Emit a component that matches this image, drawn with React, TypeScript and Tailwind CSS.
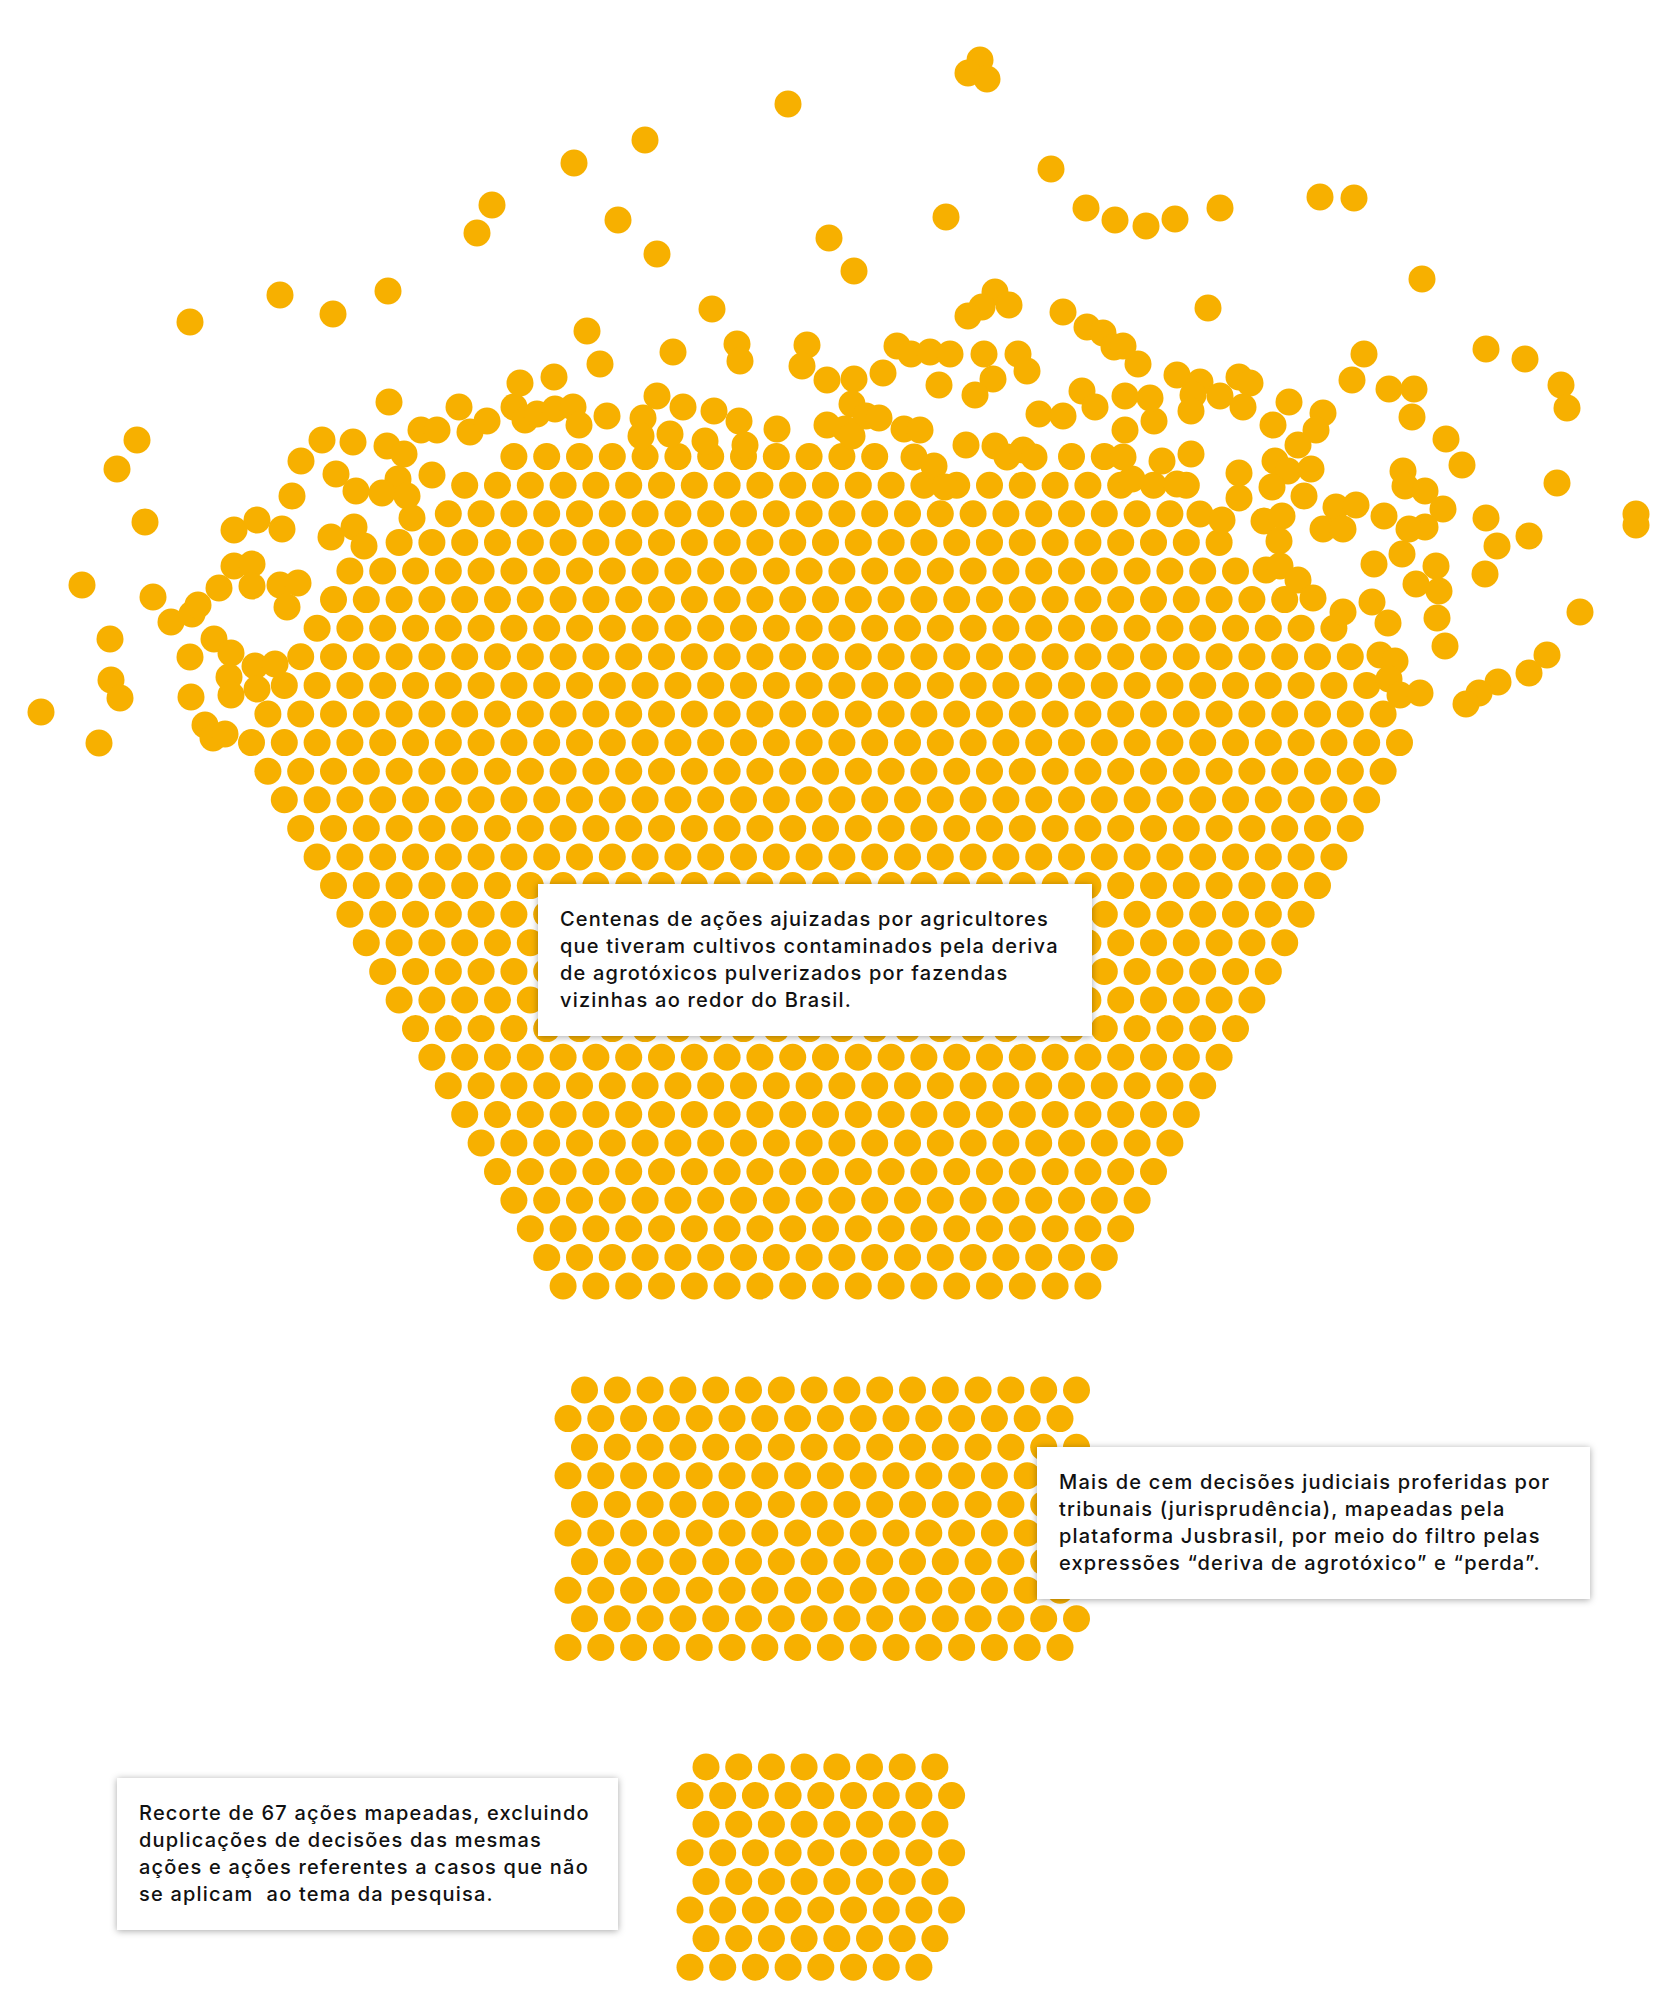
const DOT = '#f7b000';
const R = 13.5;

type Pt = [number, number];

// funnel rows counted from the bottom; [missing on left, missing on right]
const topMiss: Record<number, [number, number]> = {
  20: [1, 1],
  21: [2, 2],
  22: [3, 3],
  23: [4, 4],
  24: [5, 6],
  25: [6, 8],
  26: [8, 9],
  27: [10, 11],
  28: [11, 11],
  29: [13, 14],
};

function funnelDots(): Pt[] {
  const pts: Pt[] = [];
  for (let r = 0; r < 30; r++) {
    const y = 1286 - r * 28.6;
    const n = 17 + r;
    const [lm, rm] = topMiss[r] ?? [0, 0];
    for (let k = lm; k <= n - 1 - rm; k++) {
      if (r === 29 && k >= 25 && k <= 29) continue;
      pts.push([825.5 + (k - (n - 1) / 2) * 32.8, y]);
    }
  }
  return pts;
}

function rectDots(): Pt[] {
  const pts: Pt[] = [];
  for (let i = 0; i < 10; i++) {
    const x0 = i % 2 === 0 ? 584.5 : 568;
    for (let k = 0; k < 16; k++) pts.push([x0 + k * 32.8, 1390 + i * 28.6]);
  }
  return pts;
}

function smallDots(): Pt[] {
  const pts: Pt[] = [];
  for (let i = 0; i < 8; i++) {
    const odd = i % 2 === 1;
    const x0 = odd ? 690 : 706;
    const n = odd && i < 7 ? 9 : 8;
    for (let k = 0; k < n; k++) pts.push([x0 + k * 32.7, 1767 + i * 28.6]);
  }
  return pts;
}

// loose dots splashing above the pile
const loose: Pt[] = [
  [980, 60], [968, 73], [987, 79], [788, 104], [645, 140], [574, 163], [1051, 169],
  [492, 205], [477, 233], [618, 220], [657, 254], [946, 217], [829, 238], [854, 271],
  [1086, 208], [1115, 220], [1146, 226], [1175, 219], [1220, 208], [1320, 197], [1354, 198],
  [1422, 279], [1208, 308], [995, 292], [982, 307], [968, 316], [1009, 305],
  [1063, 312], [1087, 327], [1103, 333], [1114, 347],
  [712, 309], [190, 322], [280, 295], [333, 314], [388, 291],
  // left
  [389, 402], [137, 440], [117, 469], [145, 522], [82, 585], [153, 597], [110, 639],
  [111, 680], [120, 698], [41, 712], [99, 743], [190, 657], [191, 697],
  [171, 622], [192, 614], [198, 605], [214, 639], [231, 653], [229, 677], [231, 695],
  [205, 725], [213, 738], [225, 734], [219, 588], [234, 566], [252, 564], [252, 586],
  [234, 530], [257, 520], [282, 529], [292, 496], [301, 461], [322, 440], [353, 442],
  [336, 474], [356, 491], [331, 537], [354, 527], [364, 546], [280, 585], [298, 583],
  [287, 607], [255, 666], [275, 664], [257, 689], [282, 689], [296, 661],
  [387, 446], [404, 454], [398, 479], [382, 493], [407, 496], [412, 518], [432, 475],
  [421, 430], [437, 430], [459, 407], [470, 432], [487, 421], [514, 407], [525, 420],
  [537, 414], [555, 409], [520, 383], [554, 377],
  // middle
  [587, 331], [600, 364], [673, 352], [737, 344], [740, 361], [807, 345], [802, 366],
  [827, 380], [854, 379], [883, 373], [897, 346], [911, 354], [930, 352], [950, 354],
  [984, 354], [993, 379], [975, 395], [1018, 354], [1027, 371], [939, 385],
  [1039, 414], [1063, 416], [1082, 391], [1095, 407], [966, 445], [995, 446], [1007, 457],
  [1023, 450], [1034, 457], [573, 407], [579, 425], [607, 416], [643, 418], [641, 436],
  [657, 396], [670, 434], [683, 407], [705, 441], [714, 411], [739, 421], [745, 445],
  [777, 429], [852, 404], [845, 429], [827, 425], [866, 416], [879, 418], [852, 436],
  [904, 429], [920, 430], [914, 457], [934, 466], [929, 486], [945, 487],
  // right
  [1486, 349], [1525, 359], [1561, 385], [1567, 408], [1364, 354], [1352, 380],
  [1389, 389], [1414, 389], [1412, 417], [1446, 439], [1462, 465], [1557, 483],
  [1636, 514], [1636, 525], [1486, 518], [1497, 546], [1529, 536], [1485, 574],
  [1580, 612], [1547, 655], [1529, 673], [1498, 682], [1479, 693], [1466, 704],
  [1445, 646], [1437, 618], [1436, 566], [1416, 584], [1439, 591], [1402, 554],
  [1374, 564], [1403, 471], [1405, 486], [1425, 491], [1443, 509], [1425, 527],
  [1409, 529], [1384, 516], [1372, 602], [1388, 623], [1343, 612], [1329, 625],
  [1380, 655], [1395, 661], [1389, 679], [1400, 695], [1420, 693], [1336, 507],
  [1356, 505], [1323, 529], [1343, 529], [1264, 521], [1282, 516], [1279, 541],
  [1266, 570], [1280, 566], [1298, 580], [1286, 593], [1313, 598], [1275, 461],
  [1288, 471], [1311, 469], [1304, 496], [1272, 487], [1239, 473], [1239, 498],
  [1289, 402], [1273, 425], [1323, 413], [1316, 430], [1298, 445], [1191, 454],
  [1162, 461], [1177, 484], [1152, 486], [1132, 479], [1177, 375], [1200, 382],
  [1193, 395], [1191, 411], [1220, 396], [1239, 377], [1250, 383], [1243, 407],
  [1154, 421], [1150, 398], [1138, 364], [1123, 346], [1125, 396], [1125, 430],
  [1123, 457], [1200, 514], [1222, 520], [1216, 541],
];

function allDots(): Pt[] {
  const grid = [...funnelDots(), ...rectDots(), ...smallDots()];
  const extra = loose.filter(
    ([x, y]) => !grid.some(([gx, gy]) => Math.hypot(gx - x, gy - y) < 9)
  );
  return [...grid, ...extra];
}

function Note({ className, lines }: { className: string; lines: string[] }) {
  return (
    <div
      className={`absolute bg-white px-[22px] py-[22px] shadow-[0_1px_7px_rgba(0,0,0,0.35)] ${className}`}
    >
      {lines.map((l, i) => (
        <p
          key={i}
          className="whitespace-pre text-[20px] font-medium leading-[27px] tracking-[1.2px] text-[#111]"
        >
          {l}
        </p>
      ))}
    </div>
  );
}

export default function App() {
  const dots = allDots();

  return (
    <div className="relative h-[2000px] w-[1678px] overflow-hidden bg-white font-['Inter',sans-serif]">
      <svg width={1678} height={2000} className="absolute left-0 top-0">
        {dots.map(([x, y], i) => (
          <circle key={i} cx={x} cy={y} r={R} fill={DOT} />
        ))}
      </svg>

      <Note
        className="left-[538px] top-[884px] h-[152px] w-[554px]"
        lines={[
          'Centenas de ações ajuizadas por agricultores',
          'que tiveram cultivos contaminados pela deriva',
          'de agrotóxicos pulverizados por fazendas',
          'vizinhas ao redor do Brasil.',
        ]}
      />
      <Note
        className="left-[1037px] top-[1447px] h-[152px] w-[553px]"
        lines={[
          'Mais de cem decisões judiciais proferidas por',
          'tribunais (jurisprudência), mapeadas pela',
          'plataforma Jusbrasil, por meio do filtro pelas',
          'expressões “deriva de agrotóxico” e “perda”.',
        ]}
      />
      <Note
        className="left-[117px] top-[1778px] h-[152px] w-[501px]"
        lines={[
          'Recorte de 67 ações mapeadas, excluindo',
          'duplicações de decisões das mesmas',
          'ações e ações referentes a casos que não',
          'se aplicam  ao tema da pesquisa.',
        ]}
      />
    </div>
  );
}
